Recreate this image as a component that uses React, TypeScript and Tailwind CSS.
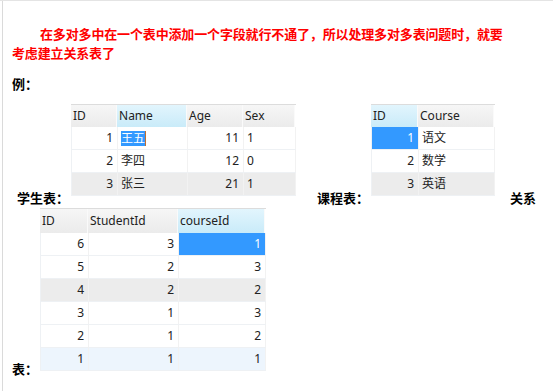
import type { ReactNode } from "react";

type Cell = { v: ReactNode; right?: boolean; sel?: boolean };

interface GridProps {
    cols: { name: string; w: string; active?: boolean }[];
    rows: { cells: Cell[]; tone?: "gray" | "blue" }[];
    headH: string;
}

function Grid({ cols, rows, headH }: GridProps) {
    return (
        <div className="flex flex-col text-[12px] font-normal text-[#222] font-['Noto_Sans','Noto_Sans_CJK_SC',sans-serif] shrink-0">
            {/* header */}
            <div className={`flex ${headH} border-t border-[#dcdcdc]`}>
                {cols.map((c) => (
                    <div
                        key={c.name}
                        className={`${c.w} flex items-center pl-[2px] border-r border-[#fafafa] ${
                            c.active
                                ? "bg-gradient-to-b from-[#e2f5fd] to-[#c9ebf9]"
                                : "bg-gradient-to-b from-[#f6f6f6] to-[#ebebeb]"
                        }`}
                    >
                        {c.name}
                    </div>
                ))}
            </div>
            {rows.map((r, i) => (
                <div
                    key={i}
                    className={`flex h-[23px] border-b border-l border-[#eef1f4] ${
                        r.tone === "gray" ? "bg-[#ececec]" : r.tone === "blue" ? "bg-[#edf5fd]" : "bg-white"
                    }`}
                >
                    {r.cells.map((c, j) => (
                        <div
                            key={j}
                            className={`${cols[j].w} flex items-center border-r border-[#f2f2f2] ${
                                c.right ? "justify-end pr-[4px]" : "pl-[3px]"
                            } ${c.sel ? "bg-[#3399ff] text-white" : ""}`}
                        >
                            {c.v}
                        </div>
                    ))}
                </div>
            ))}
        </div>
    );
}

const num = (v: ReactNode, sel = false): Cell => ({ v, right: true, sel });
const txt = (v: ReactNode): Cell => ({ v });

export default function App() {
    return (
        <div className="w-[553px] h-[391px] bg-white overflow-hidden border-t border-[#e4e4e4]">
            <div className="ml-[2px] h-full border-l border-[#dadada] pl-[9px] font-['Noto_Sans_CJK_SC',sans-serif] font-bold text-[13px]">
                <p className="pt-[23px] leading-[19px] text-[#ff0000] tracking-[-0.15px] indent-[28px]">
                    在多对多中在一个表中添加一个字段就行不通了，所以处理多对多表问题时，就要
                    <br />
                    考虑建立关系表了
                </p>
                <p className="mt-[12px] leading-[19px] text-black">例：</p>

                {/* line 1 */}
                <div className="mt-[11px] flex items-end text-black">
                    <span className="ml-[5px] leading-[16px]">学生表：</span>
                    <div className="ml-[2px] mb-[10px]">
                        <Grid
                            headH="h-[23px]"
                            cols={[
                                { name: "ID", w: "w-[46px]" },
                                { name: "Name", w: "w-[70px]", active: true },
                                { name: "Age", w: "w-[56px]" },
                                { name: "Sex", w: "w-[52px]" },
                            ]}
                            rows={[
                                {
                                    cells: [
                                        num("1"),
                                        txt(
                                            <span className="flex items-center">
                                                <span className="bg-[#3399ff] text-white leading-[15px]">王五</span>
                                                <span className="w-[1px] h-[15px] bg-[#c07030]" />
                                            </span>
                                        ),
                                        num("11"),
                                        txt("1"),
                                    ],
                                },
                                { cells: [num("2"), txt("李四"), num("12"), txt("0")] },
                                { cells: [num("3"), txt("张三"), num("21"), txt("1")], tone: "gray" },
                            ]}
                        />
                    </div>
                    <span className="ml-[21px] leading-[16px]">课程表：</span>
                    <div className="ml-[2px] mb-[10px]">
                        <Grid
                            headH="h-[23px]"
                            cols={[
                                { name: "ID", w: "w-[47px]", active: true },
                                { name: "Course", w: "w-[76px]" },
                            ]}
                            rows={[
                                { cells: [num("1", true), txt("语文")] },
                                { cells: [num("2"), txt("数学")] },
                                { cells: [num("3"), txt("英语")], tone: "gray" },
                            ]}
                        />
                    </div>
                    <span className="ml-[15px] leading-[16px]">关系</span>
                </div>

                {/* line 2 */}
                <div className="mt-[2px] flex items-end text-black">
                    <span className="leading-[16px]">表：</span>
                    <div className="ml-[2px] mb-[6px]">
                        <Grid
                            headH="h-[25px]"
                            cols={[
                                { name: "ID", w: "w-[48px]" },
                                { name: "StudentId", w: "w-[90px]" },
                                { name: "courseId", w: "w-[87px]", active: true },
                            ]}
                            rows={[
                                { cells: [num("6"), num("3"), num("1", true)] },
                                { cells: [num("5"), num("2"), num("3")] },
                                { cells: [num("4"), num("2"), num("2")], tone: "gray" },
                                { cells: [num("3"), num("1"), num("3")] },
                                { cells: [num("2"), num("1"), num("2")] },
                                { cells: [num("1"), num("1"), num("1")], tone: "blue" },
                            ]}
                        />
                    </div>
                </div>
            </div>
        </div>
    );
}
